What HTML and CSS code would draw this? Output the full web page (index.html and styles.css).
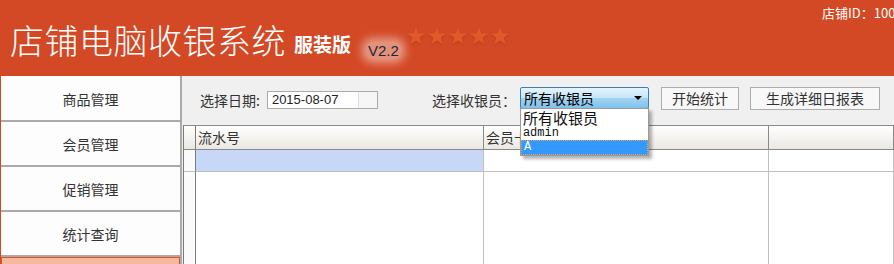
FILE: index.html
```html
<!DOCTYPE html>
<html lang="zh-CN">
<head>
    <meta charset="UTF-8" />
    <meta name="viewport" content="width=device-width, initial-scale=1.0" />
    <title>店铺电脑收银系统</title>
    <link rel="stylesheet" href="styles.css">
</head>
<body>
    <div class="app">
        <header class="banner">
            <div class="brand">
                <h1 class="brand-title">店铺电脑收银系统</h1>
                <span class="brand-edition">服装版</span>
                <span class="brand-version">V2.2</span>
                <span class="brand-stars">
                    <svg class="star" viewBox="0 0 20 19"><polygon points="10,0 12.4,6.6 19.5,6.9 13.9,11.3 15.9,18.2 10,14.2 4.1,18.2 6.1,11.3 0.5,6.9 7.6,6.6" /></svg>
                    <svg class="star" viewBox="0 0 20 19"><polygon points="10,0 12.4,6.6 19.5,6.9 13.9,11.3 15.9,18.2 10,14.2 4.1,18.2 6.1,11.3 0.5,6.9 7.6,6.6" /></svg>
                    <svg class="star" viewBox="0 0 20 19"><polygon points="10,0 12.4,6.6 19.5,6.9 13.9,11.3 15.9,18.2 10,14.2 4.1,18.2 6.1,11.3 0.5,6.9 7.6,6.6" /></svg>
                    <svg class="star" viewBox="0 0 20 19"><polygon points="10,0 12.4,6.6 19.5,6.9 13.9,11.3 15.9,18.2 10,14.2 4.1,18.2 6.1,11.3 0.5,6.9 7.6,6.6" /></svg>
                    <svg class="star" viewBox="0 0 20 19"><polygon points="10,0 12.4,6.6 19.5,6.9 13.9,11.3 15.9,18.2 10,14.2 4.1,18.2 6.1,11.3 0.5,6.9 7.6,6.6" /></svg>
                </span>
            </div>
            <div class="store-id">店铺ID：1001</div>
        </header>

        <div class="main">
            <nav class="sidebar">
                <a class="nav-item">商品管理</a>
                <a class="nav-item">会员管理</a>
                <a class="nav-item">促销管理</a>
                <a class="nav-item">统计查询</a>
                <a class="nav-item active">日报表</a>
            </nav>

            <section class="content">
                <div class="toolbar">
                    <label class="field-label">选择日期:</label>
                    <div class="date-input">
                        <span class="date-text">2015-08-07</span>
                        <span class="date-btn"></span>
                    </div>

                    <label class="field-label cashier-label">选择收银员：</label>
                    <div class="select">
                        <div class="select-box">
                            <span>所有收银员</span>
                            <span class="select-arrow"></span>
                        </div>
                        <ul class="select-list">
                            <li class="opt">所有收银员</li>
                            <li class="opt opt-latin">admin</li>
                            <li class="opt opt-latin selected">A</li>
                        </ul>
                    </div>

                    <button class="btn">开始统计</button>
                    <button class="btn">生成详细日报表</button>
                </div>

                <div class="grid">
                    <div class="cell head rowhead"></div>
                    <div class="cell head">流水号</div>
                    <div class="cell head">会员卡号</div>
                    <div class="cell head"></div>

                    <div class="cell row rowhead"></div>
                    <div class="cell row current"></div>
                    <div class="cell row"></div>
                    <div class="cell row"></div>

                    <div class="cell fill rowhead"></div>
                    <div class="cell fill"></div>
                    <div class="cell fill"></div>
                    <div class="cell fill"></div>
                </div>
            </section>
        </div>
    </div>
</body>
</html>
```

FILE: styles.css
```css
* {
    box-sizing: border-box;
}

body {
    margin: 0;
    font-family: "Noto Sans CJK SC", "Liberation Sans", sans-serif;
    background-color: #f0f0f0;
    overflow: hidden;
}

.app {
    width: 894px;
    height: 264px;
    display: flex;
    flex-direction: column;
    overflow: hidden;
}

/* header banner */
.banner {
    position: relative;
    height: 76px;
    flex-shrink: 0;
    background-color: #d34926;
}

.brand {
    display: flex;
    align-items: flex-end;
    padding: 19px 0 0 10px;
}

.brand-title {
    margin: 0;
    font-size: 34px;
    font-weight: 300;
    line-height: 42px;
    color: #fff;
    letter-spacing: 0.5px;
}

.brand-edition {
    margin: 0 0 5px 8px;
    font-size: 19px;
    font-weight: bold;
    line-height: 24px;
    color: #fff;
}

.brand-version {
    margin: 0 0 2px 15px;
    padding: 0 2px;
    font-family: "Liberation Sans", sans-serif;
    font-size: 15px;
    line-height: 17px;
    color: #1c2838;
    background-color: rgba(255, 255, 255, 0.4);
    box-shadow: 0 0 8px 4px rgba(255, 255, 255, 0.45);
    border-radius: 6px;
}

.brand-stars {
    align-self: flex-start;
    display: flex;
    gap: 1px;
    margin: 8px 0 0 5px;
}

    .brand-stars .star {
        width: 20px;
        height: 18px;
        fill: #e0592b;
        filter: drop-shadow(0 1px 1px rgba(150, 40, 10, 0.4));
    }

.store-id {
    position: absolute;
    left: 822px;
    top: 3px;
    font-size: 13px;
    color: #fff;
    white-space: nowrap;
}

/* body */
.main {
    flex: 1;
    display: flex;
    min-height: 0;
}

.sidebar {
    width: 182px;
    flex-shrink: 0;
    padding-top: 1px;
    border-left: 1px solid #d34926;
    border-right: 2px solid #aaa;
    background-color: #fff;
    display: flex;
    flex-direction: column;
}

.nav-item {
    display: flex;
    align-items: center;
    justify-content: center;
    height: 45px;
    flex-shrink: 0;
    background-color: #fdfdfd;
    border-bottom: 2px solid #aaa;
    font-size: 14px;
    color: #333;
}

    .nav-item.active {
        background-color: #f6b99b;
        border: 1px solid #e0502a;
        color: #fff;
    }

.content {
    flex: 1;
    display: flex;
    flex-direction: column;
    background-color: #f0f0f0;
    min-width: 0;
}

/* toolbar */
.toolbar {
    height: 49px;
    flex-shrink: 0;
    display: flex;
    align-items: center;
    padding: 0 0 2px 18px;
    font-size: 14px;
    color: #333;
}

.field-label {
    line-height: 20px;
}

.date-input {
    display: flex;
    width: 111px;
    height: 18px;
    margin-left: 7px;
    background-color: #fff;
    border: 1px solid #aaa;
}

.date-text {
    flex: 1;
    padding-left: 4px;
    font-family: "Liberation Sans", sans-serif;
    font-size: 13px;
    line-height: 16px;
    color: #222;
}

.date-btn {
    width: 19px;
    border-left: 1px solid #e0e0e0;
    background-color: #f6f6f6;
}

.cashier-label {
    margin-left: 54px;
}

.select {
    position: relative;
    margin-left: 4px;
    margin-top: -3px;
}

.select-box {
    display: flex;
    align-items: center;
    justify-content: space-between;
    width: 129px;
    height: 22px;
    padding: 0 6px 0 3px;
    border: 1px solid #3c7fb1;
    border-radius: 2px;
    background: linear-gradient(#e6f4fc 0%, #c6e6f8 48%, #a2d3f0 52%, #7fc2ea 100%);
    font-size: 14px;
    color: #000;
}

.select-arrow {
    width: 0;
    height: 0;
    border-left: 4px solid transparent;
    border-right: 4px solid transparent;
    border-top: 4px solid #000;
}

.select-list {
    position: absolute;
    top: 21px;
    left: 0;
    width: 129px;
    margin: 0;
    padding: 0;
    list-style: none;
    background-color: #fff;
    border: 1px solid #9a9a9a;
    box-shadow: 3px 3px 3px rgba(0, 0, 0, 0.3);
    z-index: 2;
}

.opt {
    height: 17px;
    padding-left: 2px;
    font-size: 15px;
    line-height: 17px;
    color: #111;
}

.opt-latin {
    height: 14px;
    font-family: "Liberation Mono", monospace;
    font-size: 12px;
    line-height: 14px;
}

    .opt.selected {
        height: 15px;
        background-color: #3399ff;
        color: #fff;
        border: 1px dotted #e8a060;
        line-height: 13px;
    }

.btn {
    height: 23px;
    margin-left: 12px;
    margin-top: -2px;
    padding: 0 10px;
    background-color: #f8f8f8;
    border: 1px solid #adadad;
    font-family: "Noto Sans CJK SC", sans-serif;
    font-size: 14px;
    line-height: 19px;
    color: #333;
}

    .btn + .btn {
        margin-left: 11px;
        padding: 0 15px;
    }

/* data grid */
.grid {
    flex: 1;
    margin-left: 1px;
    display: grid;
    grid-template-columns: 12px 288px 285px 1fr;
    grid-template-rows: 24px 22px 1fr;
    background-color: #fff;
    border-left: 1px solid #7a7a7a;
    border-top: 1px solid #8a8a8a;
}

.cell {
    border-right: 1px solid #c0c0c0;
}

    .cell.head {
        background: linear-gradient(#ffffff, #ebe8e2);
        border-right: 1px solid #8a8a8a;
        border-bottom: 1px solid #8a8a8a;
        padding-left: 2px;
        font-size: 14px;
        line-height: 22px;
        color: #333;
    }

    .cell.row {
        border-bottom: 1px solid #c0c0c0;
    }

    .cell.rowhead {
        background: #fafafa;
        border-right: 1px solid #7a7a7a;
    }

    .cell.head.rowhead {
        background: linear-gradient(#ffffff, #ebe8e2);
    }

    .cell.current {
        background-color: #c7d7f8;
    }
```
